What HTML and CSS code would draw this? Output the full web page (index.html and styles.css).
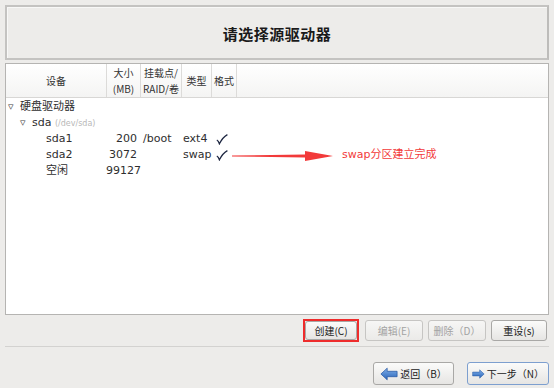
FILE: index.html
```html
<!DOCTYPE html>
<html lang="zh-CN">
<head>
    <meta charset="UTF-8">
    <meta name="viewport" content="width=device-width, initial-scale=1.0">
    <title>请选择源驱动器</title>
    <link rel="stylesheet" href="styles.css">
</head>
<body>
    <div class="header-box">
        <h1>请选择源驱动器</h1>
    </div>

    <div class="tree-panel">
        <div class="tree-head">
            <div class="col c-dev">设备</div>
            <div class="col c-size">大小<br>(MB)</div>
            <div class="col c-mount">挂载点/<br>RAID/卷</div>
            <div class="col c-type">类型</div>
            <div class="col c-fmt">格式</div>
            <div class="col c-rest"></div>
        </div>
        <div class="tree-body">
            <div class="row">
                <div class="c-dev lvl0"><span class="tri">&#9663;</span>硬盘驱动器</div>
            </div>
            <div class="row">
                <div class="c-dev lvl1"><span class="tri">&#9663;</span>sda <span class="dim">(/dev/sda)</span></div>
            </div>
            <div class="row">
                <div class="c-dev lvl2">sda1</div>
                <div class="c-size num">200</div>
                <div class="c-mount cell">/boot</div>
                <div class="c-type cell">ext4</div>
                <div class="c-fmt check">
                    <svg width="12" height="11" viewBox="0 0 12 11"><path d="M0.8 6 C2 6.5 2.8 7.8 3.4 9.8 C5.5 5.5 8 2.5 11.4 0.6" fill="none" stroke="#1c2540" stroke-width="1.3"/></svg>
                </div>
            </div>
            <div class="row">
                <div class="c-dev lvl2">sda2</div>
                <div class="c-size num">3072</div>
                <div class="c-mount cell"></div>
                <div class="c-type cell">swap</div>
                <div class="c-fmt check">
                    <svg width="12" height="11" viewBox="0 0 12 11"><path d="M0.8 6 C2 6.5 2.8 7.8 3.4 9.8 C5.5 5.5 8 2.5 11.4 0.6" fill="none" stroke="#1c2540" stroke-width="1.3"/></svg>
                </div>
                <div class="note">
                    <svg class="note-arrow" width="101" height="10" viewBox="0 0 101 10">
                        <polygon points="0,4.6 73,3.6 73,0 101,5 73,10 73,6.4 0,5.4" fill="#f23a3a"/>
                    </svg>
                    <span class="note-text">swap分区建立完成</span>
                </div>
            </div>
            <div class="row">
                <div class="c-dev lvl2">空闲</div>
                <div class="c-size num">99127</div>
            </div>
        </div>
    </div>

    <div class="action-row">
        <span class="mark"><button class="btn">创建(C)</button></span>
        <button class="btn" disabled>编辑(E)</button>
        <button class="btn" disabled>删除（D）</button>
        <button class="btn">重设(s)</button>
    </div>

    <div class="nav-row">
        <button class="btn nav">
            <svg width="18" height="14" viewBox="0 0 20 14">
                <defs>
                    <linearGradient id="bl" x1="0" y1="0" x2="0" y2="1">
                        <stop offset="0" stop-color="#7fb0ea"/>
                        <stop offset="1" stop-color="#2a64b8"/>
                    </linearGradient>
                </defs>
                <polygon points="1,7 8,0.5 8,4 19,4 19,10 8,10 8,13.5" fill="url(#bl)" stroke="#2457a3" stroke-width="0.8"/>
            </svg>
            <span>返回（B）</span>
        </button>
        <button class="btn nav focus">
            <svg width="18" height="14" viewBox="0 0 20 14">
                <defs>
                    <linearGradient id="br" x1="0" y1="0" x2="0" y2="1">
                        <stop offset="0" stop-color="#7fb0ea"/>
                        <stop offset="1" stop-color="#2a64b8"/>
                    </linearGradient>
                </defs>
                <polygon points="19,7 12,0.5 12,4 1,4 1,10 12,10 12,13.5" fill="url(#br)" stroke="#2457a3" stroke-width="0.8"/>
            </svg>
            <span>下一步（N）</span>
        </button>
    </div>
</body>
</html>
```

FILE: styles.css
```css
body {
    margin: 0;
    padding: 5px 5px 0 5px;
    background-color: #edecea;
    color: #2e2e2e;
    font-family: "DejaVu Sans", "Noto Sans CJK SC", sans-serif;
    font-size: 11px;
    height: 383px;
    overflow: hidden;
}

.header-box {
    height: 51px;
    border: 2px solid #c4c3c1;
    border-right-color: #bdbcba;
    box-shadow: inset 1px 1px 0 #f8f8f7;
    display: flex;
    align-items: center;
    justify-content: center;
}

h1 {
    margin: 2px 0 0 0;
    font-family: "Noto Sans CJK SC", sans-serif;
    font-size: 15px;
    font-weight: bold;
    color: #1a1a1a;
    letter-spacing: 0.5px;
}

.tree-panel {
    margin-top: 3px;
    height: 250px;
    border: 1px solid #b5b4b2;
    background-color: #ffffff;
}

.tree-head {
    display: flex;
    height: 33px;
    border-bottom: 1px solid #d8d7d5;
    background: linear-gradient(#ffffff, #f4f4f3);
}

.tree-head .col {
    display: flex;
    align-items: center;
    justify-content: center;
    text-align: center;
    line-height: 16px;
    border-right: 1px solid #dcdbd9;
    font-size: 10px;
    font-family: "Noto Sans CJK SC", sans-serif;
    color: #333;
}

.c-dev { width: 100px; flex-shrink: 0; }
.c-size { width: 33px; flex-shrink: 0; }
.c-mount { width: 40px; flex-shrink: 0; }
.c-type { width: 29px; flex-shrink: 0; }
.c-fmt { width: 24px; flex-shrink: 0; }

.tree-head .c-rest { border-right: none; flex-grow: 1; }

.tree-body {
    padding-top: 1px;
}

.row {
    display: flex;
    align-items: center;
    height: 16px;
    line-height: 16px;
}

.lvl0 { padding-left: 2px; box-sizing: border-box; }
.lvl1 { padding-left: 14px; box-sizing: border-box; }
.lvl2 { padding-left: 40px; box-sizing: border-box; }

.tri {
    display: inline-block;
    width: 12px;
    font-size: 11px;
    color: #444;
}

.dim {
    color: #b8b8b8;
    font-size: 8px;
}

.num {
    text-align: right;
    padding-right: 2px;
    box-sizing: border-box;
}

.cell {
    padding-left: 4px;
    box-sizing: border-box;
}

.c-type.cell { padding-left: 4px; }

.check {
    display: flex;
    align-items: center;
    padding-left: 8px;
    box-sizing: border-box;
}

.check svg { display: block; }

.note {
    display: flex;
    align-items: center;
}

.note-arrow {
    display: block;
    margin-top: 1px;
}

.note-text {
    margin-left: 9px;
    color: #f23a3a;
    font-size: 11px;
}

.action-row {
    display: flex;
    justify-content: flex-end;
    align-items: center;
    gap: 5px;
    height: 25px;
    margin-top: 3px;
    padding-right: 2px;
    border-bottom: 1px solid #d3d2d0;
    padding-bottom: 3px;
}

.btn {
    height: 21px;
    padding: 0 4px;
    border: 1px solid #a9a8a6;
    border-radius: 3px;
    background: linear-gradient(#fbfbfa, #e6e5e3);
    font-family: "Noto Sans CJK SC", sans-serif;
    font-size: 10px;
    color: #222;
    display: flex;
    align-items: center;
    justify-content: center;
    white-space: nowrap;
}

.btn[disabled] {
    color: #a3a3a3;
    border-color: #c6c5c3;
    background: linear-gradient(#f6f6f5, #ebeae8);
}

.action-row .btn { width: 56px; }
.action-row .btn[disabled] { width: 58px; }

.mark {
    border: 2px solid #ee2c2c;
    display: flex;
    margin-right: 1px;
}

.mark .btn { width: 52px; height: 19px; }

.nav-row {
    display: flex;
    justify-content: flex-end;
    gap: 13px;
    margin-top: 15px;
}

.nav {
    height: 23px;
    gap: 2px;
}

.nav-row .nav:first-child { width: 81px; }
.nav-row .focus { width: 82px; border-color: #7d9fcf; }
```
